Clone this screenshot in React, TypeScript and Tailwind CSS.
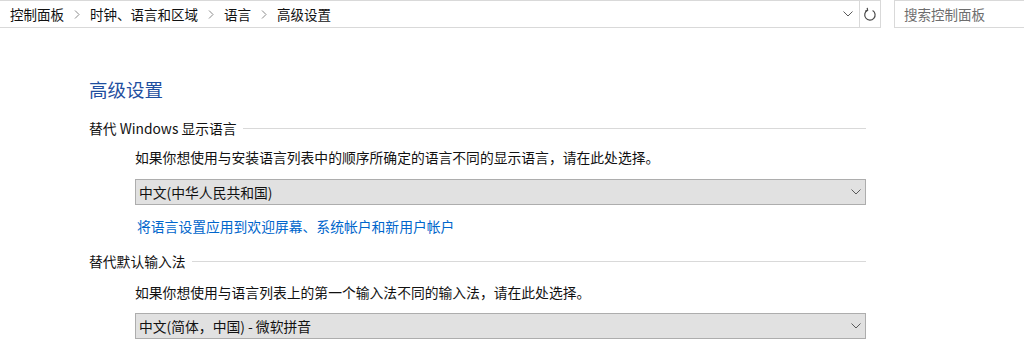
const font = { fontFamily: '"Noto Sans CJK SC", "Noto Sans", sans-serif' };

function Chevron({ className = "" }: { className?: string }) {
  return (
    <svg width="10" height="6" viewBox="0 0 10 6" className={className}>
      <path d="M0.5 0.5 L5 5 L9.5 0.5" fill="none" stroke="#5a5a5a" strokeWidth="1" />
    </svg>
  );
}

function Crumb({ label, last }: { label: string; last?: boolean }) {
  return (
    <div className="flex items-center">
      <span>{label}</span>
      {!last && (
        <svg width="6" height="9" viewBox="0 0 6 9" className="mx-[10px]">
          <path d="M1 0.5 L5 4.5 L1 8.5" fill="none" stroke="#8a8a8a" strokeWidth="1" />
        </svg>
      )}
    </div>
  );
}

function SelectBox({ value }: { value: string }) {
  return (
    <div className="flex h-[26px] w-[731px] items-center justify-between border border-[#adadad] bg-[#e1e1e1] pl-[3px] pr-[4px] text-[13.8px] leading-[20px] text-[#111]">
      <span>{value}</span>
      <Chevron />
    </div>
  );
}

function SectionTitle({ text }: { text: string }) {
  return (
    <div className="flex w-[777px] items-center text-[13.8px] leading-[20px] text-[#111]">
      <span>{text}</span>
      <div className="ml-[6px] h-px flex-1 bg-[#d9d9d9]" />
    </div>
  );
}

export default function App() {
  const crumbs = ["控制面板", "时钟、语言和区域", "语言", "高级设置"];
  return (
    <div className="h-[353px] w-[1024px] overflow-hidden bg-white" style={font}>
      <div className="flex h-[28px] items-stretch">
        <div className="flex w-[881px] items-center border-y border-r border-[#d9d9d9]">
          <div className="flex flex-1 items-center pl-[10px] text-[13.5px] leading-[20px] text-[#111]">
            {crumbs.map((c, i) => (
              <Crumb key={c} label={c} last={i === crumbs.length - 1} />
            ))}
          </div>
          <div className="flex h-full w-[23px] items-center justify-center">
            <Chevron />
          </div>
          <div className="h-full w-px bg-[#d9d9d9]" />
          <div className="flex h-full w-[20px] items-center justify-center">
            <svg width="14" height="15" viewBox="0 0 14 15">
              <path d="M4.6 3.2 A5.2 5.2 0 1 0 9.6 3.4" fill="none" stroke="#4a4a4a" strokeWidth="1.2" />
              <path d="M4.2 0.9 L4.6 3.3 L2.3 4.1" fill="none" stroke="#4a4a4a" strokeWidth="1.2" />
            </svg>
          </div>
        </div>
        <div className="ml-[13px] flex flex-1 items-center border-y border-l border-[#d9d9d9] pl-[9px] text-[13.5px] leading-[20px] text-[#6d6d6d]">
          搜索控制面板
        </div>
      </div>

      <div className="pl-[89px] pt-[49px]">
        <h1 className="text-[18.5px] leading-[24px] font-normal text-[#1f4f9f]">高级设置</h1>

        <div className="mt-[17px]">
          <SectionTitle text="替代 Windows 显示语言" />
        </div>
        <div className="pl-[46px]">
          <p className="mt-[9px] text-[13.8px] leading-[20px] text-[#111]">
            如果你想使用与安装语言列表中的顺序所确定的语言不同的显示语言，请在此处选择。
          </p>
          <div className="mt-[12px]">
            <SelectBox value="中文(中华人民共和国)" />
          </div>
          <p className="mt-[11px] pl-[2px] text-[13.8px] leading-[20px] text-[#0066cc]">
            将语言设置应用到欢迎屏幕、系统帐户和新用户帐户
          </p>
        </div>

        <div className="mt-[15px]">
          <SectionTitle text="替代默认输入法" />
        </div>
        <div className="pl-[46px]">
          <p className="mt-[11px] text-[13.8px] leading-[20px] text-[#111]">
            如果你想使用与语言列表上的第一个输入法不同的输入法，请在此处选择。
          </p>
          <div className="mt-[11px]">
            <SelectBox value="中文(简体，中国) - 微软拼音" />
          </div>
        </div>
      </div>
    </div>
  );
}
